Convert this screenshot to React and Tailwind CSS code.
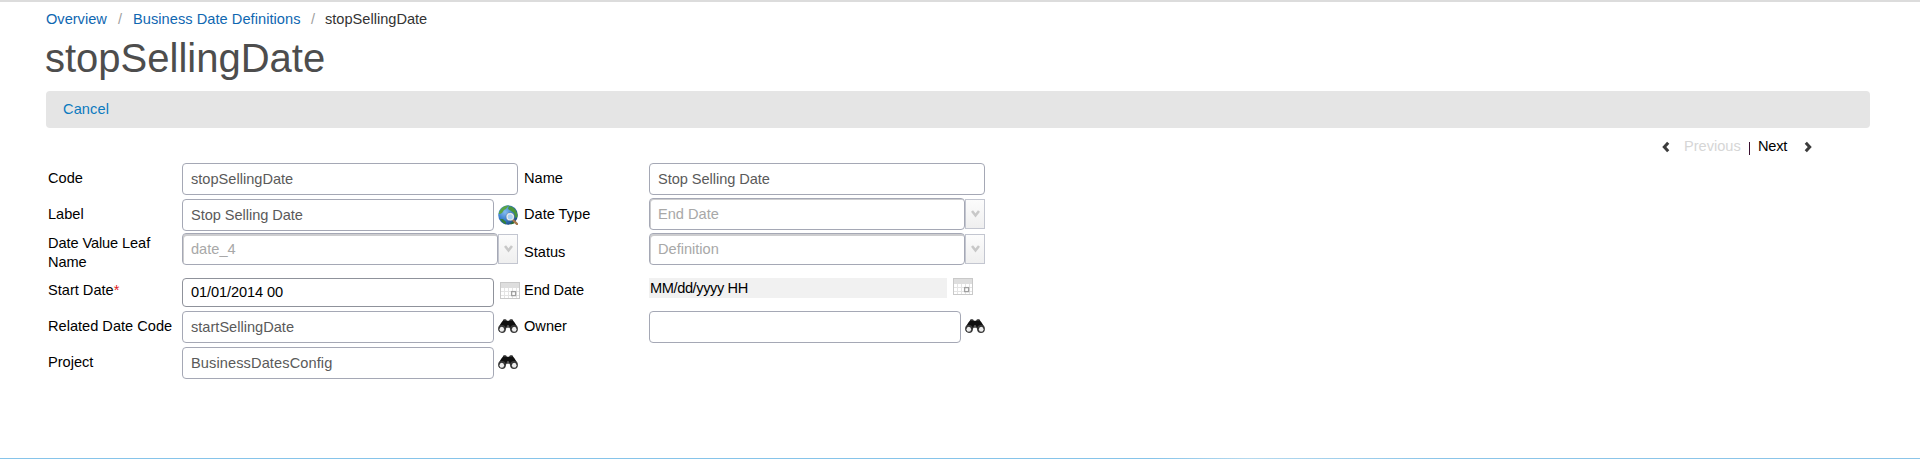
const fieldBase = 'h-8 rounded border border-[#a5a8b5] bg-white px-2 pt-[2px] text-[#5a5a5a] flex items-center whitespace-nowrap';

function Label({ className = 'pt-[6px]', children }) {
  return <div className={`leading-[19px] ${className}`}>{children}</div>;
}

function Field({ width = 'w-[312px]', className = '', children }) {
  return <div className={`${fieldBase} ${width} ${className}`}>{children}</div>;
}

function Select({ thick, children }) {
  return (
    <div className="flex">
      <div
        className={`flex h-8 w-[316px] items-center rounded border border-[#a5a8b5] bg-white px-2 pt-px text-[#a8a8a8] ${
          thick ? 'shadow-[inset_1px_2px_0_#cdcdcf]' : 'shadow-[inset_1px_1px_0_#cdcdcf]'
        }`}
      >
        {children}
      </div>
      <div className="mt-px flex h-[30px] w-5 items-center justify-center border border-[#c3c6d0] bg-linear-to-b from-[#fcfcfc] to-[#efefef]">
        <svg width="9" height="8" viewBox="0 0 9 8">
          <path d="M1 1 L4.5 5.5 L8 1" fill="none" stroke="#c8c8c8" strokeWidth="2.6" />
        </svg>
      </div>
    </div>
  );
}

function Globe() {
  return (
    <svg width="20" height="20" viewBox="0 0 20 20">
      <defs>
        <radialGradient id="sea" cx="0.35" cy="0.35" r="0.7">
          <stop offset="0" stopColor="#86bdf0" />
          <stop offset="0.55" stopColor="#3a7fd0" />
          <stop offset="1" stopColor="#1c4a80" />
        </radialGradient>
      </defs>
      <circle cx="10" cy="10" r="9.8" fill="url(#sea)" />
      <path d="M3 4 Q6 0 11 .5 Q9 2 8 4 L6 5 L4 8 L2 9 L.6 9 Q1 6 3 4Z" fill="#5aa544" />
      <path d="M11 1 Q17 2 19 8 L19.5 12 L17.5 13 L16 8 L13 6 L10 4Z" fill="#4a9639" />
      <path d="M2 14 L5 14 L8 17 L8 19.5 Q4 18 2 14Z" fill="#35803a" />
      <path d="M12 19 L15 16 L17 18 Q15 19.5 12 19Z" fill="#2b6a34" />
      <path d="M15 15 L19 19" stroke="#a5764c" strokeWidth="2.4" strokeLinecap="round" />
      <circle cx="12.2" cy="11.8" r="3.3" fill="#a9d0f2" stroke="#e9edf0" strokeWidth="1.4" />
      <circle cx="12.2" cy="11.8" r="4.2" fill="none" stroke="#53677c" strokeWidth=".4" />
    </svg>
  );
}

function Calendar() {
  return (
    <svg width="20" height="18" viewBox="0 0 20 18">
      <rect x=".5" y=".5" width="19" height="16" fill="#fff" stroke="#c9c9c9" />
      <rect x="1" y="1" width="18" height="5" fill="#dedede" />
      <path d="M1 9.5H19M1 13.5H19M4.5 6V16M8.5 6V16M12.5 6V16M16.5 6V16" stroke="#e4e4e4" strokeWidth="1" />
      <rect x="11.6" y="9.6" width="4" height="4" fill="#fff" stroke="#a0a0a0" strokeWidth="1.3" />
    </svg>
  );
}

function Binoculars() {
  return (
    <svg width="20" height="16" viewBox="0 0 20 16">
      <path d="M5 2.6 Q5 1.2 7 1.2 Q8.6 1.2 8.8 2.8 H11.2 Q11.4 1.2 13 1.2 Q15 1.2 15 2.6 L16.6 4.5 L19.4 9 L17 11.5 L12.4 11.5 L11.4 9.5 H8.6 L7.6 11.5 L3 11.5 L.6 9 L3.4 4.5Z" fill="#101010" />
      <path d="M5.6 2 H8.2M11.8 2 H14.4" stroke="#666" strokeWidth=".8" />
      <circle cx="4" cy="11" r="3.3" fill="#2e2e2e" stroke="#3a3a3a" strokeWidth="1.2" />
      <circle cx="16" cy="11" r="3.3" fill="#2e2e2e" stroke="#3a3a3a" strokeWidth="1.2" />
      <ellipse cx="3.8" cy="11.2" rx="2.3" ry="2.5" fill="#ececec" />
      <ellipse cx="16.2" cy="11.2" rx="2.3" ry="2.5" fill="#ececec" />
      <circle cx="10" cy="8.3" r="1.2" fill="#555" />
    </svg>
  );
}

function Chevron({ flip }) {
  return (
    <svg width="8" height="12" viewBox="0 0 8 12" className={flip ? 'rotate-180' : ''}>
      <path d="M6.2 1.8 L2.3 6 L6.2 10.2" fill="none" stroke="#3c3c3c" strokeWidth="3" />
    </svg>
  );
}

export default function App() {
  return (
    <div className="flex h-[459px] w-[1920px] flex-col overflow-hidden border-t-2 border-[#dcdcdc] bg-white font-['Liberation_Sans',Arial,sans-serif] text-[14.6px] text-black">
      <nav className="flex h-[34px] pt-2 pl-[46px] leading-[19px] whitespace-pre text-[#0f67b1]">
        <a className="w-[72px]">Overview</a>
        <span className="w-[15px] text-[#a0a0a0]">/</span>
        <a className="w-[178px] tracking-[0.05px]">Business Date Definitions</a>
        <span className="w-[14px] text-[#a0a0a0]">/</span>
        <span className="text-[#333]">stopSellingDate</span>
      </nav>
      <h1 className="h-[55px] pl-[45px] text-[40px] leading-[44px] text-[#4d4d4d]">stopSellingDate</h1>
      <div className="ml-[46px] h-[37px] w-[1824px] rounded bg-[#e5e5e5] pt-[9px] pl-[17px] leading-[19px] tracking-[0.1px] text-[#0b7abf]">Cancel</div>
      <div className="flex h-[35px] pt-[9px] pl-[1662px] leading-[19px]">
        <div className="w-[22px] pt-1"><Chevron /></div>
        <span className="w-[64px] text-[#d6d6d6]">Previous</span>
        <span className="mt-[5px] mr-[8px] ml-px h-[13px] w-px bg-[#3a1030]" />
        <span className="w-[46px] tracking-[-0.2px]">Next</span>
        <div className="pt-1"><Chevron flip /></div>
      </div>
      <div className="ml-12 grid h-[220px] grid-cols-[134px_342px_125px_336px] grid-rows-[36px_34px_45px_33px_36px_36px] items-start">
        <Label>Code</Label>
        <Field width="w-[336px]">stopSellingDate</Field>
        <Label>Name</Label>
        <Field width="w-[336px]" className="tracking-[-0.05px]">Stop Selling Date</Field>

        <Label>Label</Label>
        <div className="flex gap-1">
          <Field className="tracking-[-0.05px]">Stop Selling Date</Field>
          <div className="pt-[6px]"><Globe /></div>
        </div>
        <Label>Date Type</Label>
        <div className="-mt-px"><Select>End Date</Select></div>

        <Label className="w-[115px] pt-px tracking-[-0.1px]">Date Value Leaf Name</Label>
        <Select thick>date_4</Select>
        <Label className="pt-[10px]">Status</Label>
        <Select thick>Definition</Select>

        <Label className="pt-[3px]">Start Date<span className="text-[#e0201b]">*</span></Label>
        <div className="flex gap-[6px]">
          <div className="flex h-[29px] w-[312px] items-center rounded border border-[#8f929b] px-2 tracking-[-0.1px]">01/01/2014 00</div>
          <div className="pt-1"><Calendar /></div>
        </div>
        <Label className="pt-[3px] tracking-[-0.1px]">End Date</Label>
        <div className="flex gap-[6px]">
          <div className="h-5 w-[298px] bg-[#f1f1f1] pl-px leading-[21px] tracking-[-0.4px]">MM/dd/yyyy HH</div>
          <Calendar />
        </div>

        <Label>Related Date Code</Label>
        <div className="flex gap-1">
          <Field>startSellingDate</Field>
          <div className="pt-[7px]"><Binoculars /></div>
        </div>
        <Label>Owner</Label>
        <div className="flex gap-1">
          <Field />
          <div className="pt-[7px]"><Binoculars /></div>
        </div>

        <Label>Project</Label>
        <div className="flex gap-1">
          <Field className="tracking-[0.1px]">BusinessDatesConfig</Field>
          <div className="pt-[7px]"><Binoculars /></div>
        </div>
      </div>
      <div className="mt-auto h-px shrink-0 bg-linear-to-r from-[#86c4ea] from-60% via-[#b5d9ee] via-65% to-[#8bc5e9] to-75%" />
    </div>
  );
}
